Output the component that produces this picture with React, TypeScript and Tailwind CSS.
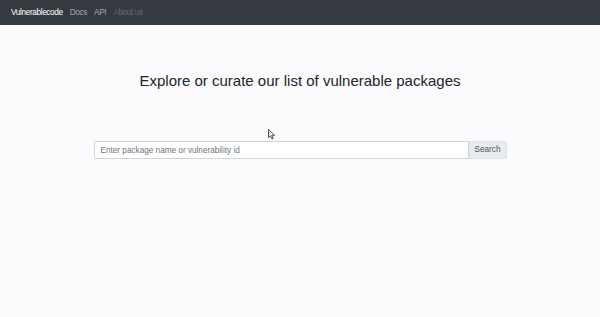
export default function App() {
  return (
    <div className="relative min-h-[317px] w-full bg-[#fbfafd]" style={{ fontFamily: "'Liberation Sans', Arial, sans-serif" }}>
      <nav className="flex h-[25px] items-center gap-[7px] bg-[#343a40] px-[11px] text-[8.3px] tracking-[-0.4px]">
        <span className="text-white">Vulnerablecode</span>
        <span className="text-[rgba(255,255,255,0.55)]">Docs</span>
        <span className="text-[rgba(255,255,255,0.55)]">API</span>
        <span className="text-[rgba(255,255,255,0.25)]">About us</span>
      </nav>

      <h1 className="mt-[46px] text-center text-[15px] leading-[20px] text-[#212529]">Explore or curate our list of vulnerable packages</h1>

      <div className="mx-auto mt-[50px] flex w-[413px]">
        <input
          className="h-[18px] flex-1 rounded-l-[2px] border border-[#ced4da] bg-white px-[6px] text-[8.2px] text-[#495057] placeholder:text-[#6c757d] outline-none"
          placeholder="Enter package name or vulnerability id"
        />
        <button className="h-[18px] rounded-r-[2px] border border-[#dee2e6] bg-[#e9ecef] px-[5px] text-[8.2px] text-[#495057]">Search</button>
      </div>

      {/* mouse pointer */}
      <svg className="absolute left-[268px] top-[129px]" width="8" height="11" viewBox="0 0 8 11">
        <path d="M0.5 0.5 L0.5 8.5 L2.5 6.8 L4 10 L5.2 9.4 L3.8 6.3 L6.5 6.3 Z" fill="white" stroke="#222" strokeWidth="0.8" />
      </svg>
    </div>
  );
}
